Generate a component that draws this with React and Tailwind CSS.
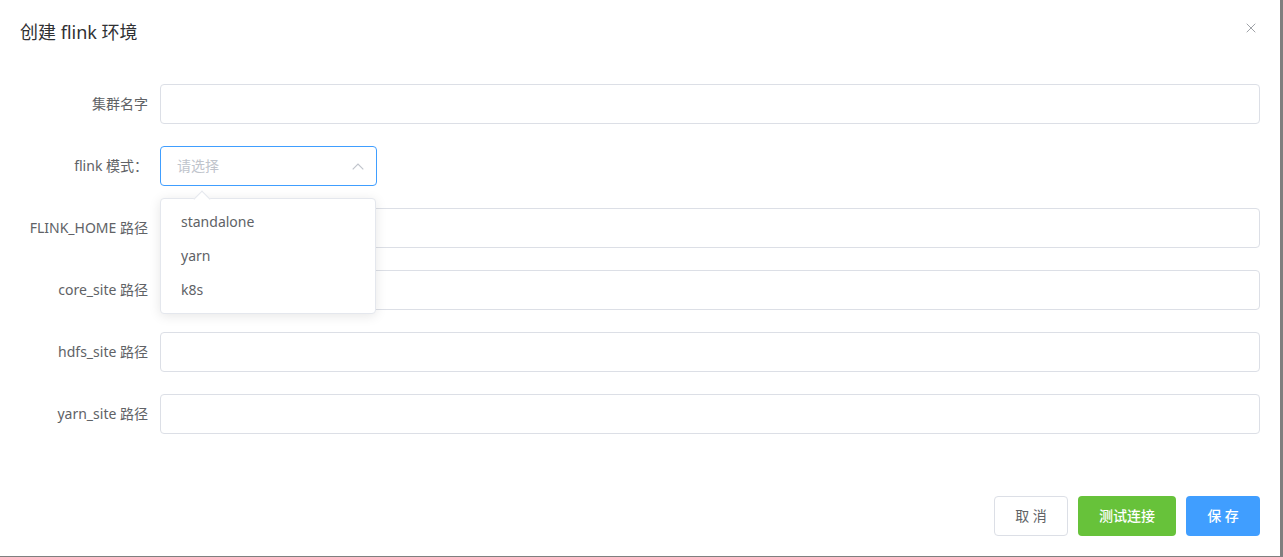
import { X } from 'lucide-react'

const input = 'h-10 w-full rounded border border-[#dcdfe6] bg-white'

function Row({ label, children }) {
  return (
    <div className="flex h-10 items-center">
      <label className="w-[148px] shrink-0 pr-0 text-right text-sm text-[#606266]">{label}</label>
      <div className="ml-3 flex-1">{children}</div>
    </div>
  )
}

export default function App() {
  return (
    <div className="h-[557px] w-[1283px] bg-[#7f7f7f] font-['Noto_Sans','Noto_Sans_CJK_SC',sans-serif]">
      <div className="relative flex h-[556px] w-[1280px] flex-col bg-white">
        <div className="flex items-center justify-between pl-5 pr-[21px] pt-5">
          <h2 className="text-lg leading-6 text-[#303133]">创建 flink 环境</h2>
          <X size={16} strokeWidth={1.3} className="-mt-2 text-[#909399]" />
        </div>

        <div className="mt-10 flex flex-col gap-[22px] pr-5">
          <Row label="集群名字">
            <div className={input} />
          </Row>
          <Row label="flink 模式：">
            <div className="relative w-[217px]">
              <div className="flex h-10 items-center justify-between rounded border border-[#409eff] bg-white pl-4 pr-3">
                <span className="text-sm text-[#c0c4cc]">请选择</span>
                <svg width="12" height="7" viewBox="0 0 12 7" fill="none" className="text-[#c0c4cc]">
                  <polyline points="0.7,6.3 6,1 11.3,6.3" stroke="currentColor" strokeWidth="1.2" />
                </svg>
              </div>
              <div className="absolute left-0 top-[52px] z-10 w-[216px] rounded border border-[#e4e7ed] bg-white py-1.5 shadow-[0_2px_12px_0_rgba(0,0,0,0.1)]">
                <div className="absolute -top-[6px] left-[35px] h-3 w-3 rotate-45 border-l border-t border-[#e4e7ed] bg-white" />
                {['standalone', 'yarn', 'k8s'].map((o) => (
                  <div key={o} className="flex h-[34px] items-center px-5 text-sm text-[#606266]">
                    {o}
                  </div>
                ))}
              </div>
            </div>
          </Row>
          <Row label="FLINK_HOME 路径">
            <div className={input} />
          </Row>
          <Row label="core_site 路径">
            <div className={input} />
          </Row>
          <Row label="hdfs_site 路径">
            <div className={input} />
          </Row>
          <Row label="yarn_site 路径">
            <div className={input} />
          </Row>
        </div>

        <div className="mt-[62px] flex justify-end gap-[10px] pr-5">
          <button className="h-10 w-[74px] rounded border border-[#dcdfe6] bg-white text-sm text-[#606266]">取 消</button>
          <button className="h-10 w-[98px] rounded bg-[#67c23a] text-sm font-medium text-white">测试连接</button>
          <button className="h-10 w-[74px] rounded bg-[#409eff] text-sm font-medium text-white">保 存</button>
        </div>
      </div>
    </div>
  )
}
